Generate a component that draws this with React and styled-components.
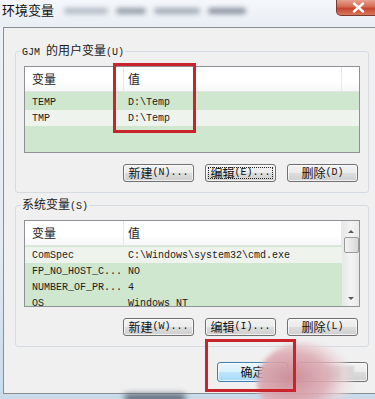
import React from 'react';
import styled, { createGlobalStyle } from 'styled-components';

const CJK = '"Noto Sans CJK SC", "Noto Sans", sans-serif';
const MONO = '"Liberation Mono", "DejaVu Sans Mono", monospace';

const GlobalStyle = createGlobalStyle`
  html, body {
    margin: 0;
    padding: 0;
    background: #c9dae9;
  }
  * {
    box-sizing: border-box;
  }
`;

const Screen = styled.div`
  position: relative;
  width: 375px;
  height: 399px;
  overflow: hidden;
  font-family: ${CJK};
  font-size: 12px;
  color: #1a1a1a;
  background: linear-gradient(180deg, #eef2f7 0%, #e4ebf3 60%, #c9dbea 100%);
`;

const TitleBar = styled.div`
  height: 27px;
  display: flex;
  align-items: flex-start;
  padding-left: 2px;
  background: linear-gradient(180deg, #f4f7fb 0%, #e9eef4 100%);
`;

const Title = styled.div`
  font-size: 13px;
  line-height: 14px;
  margin-top: 3px;
  color: #111;
`;

const BlurredText = styled.div`
  display: flex;
  gap: 8px;
  margin: 8px 0 0 10px;
  filter: blur(2.5px);
  opacity: 0.8;
`;

const BlurChunk = styled.span`
  display: block;
  width: ${p => p.w}px;
  height: 6px;
  border-radius: 3px;
  background: ${p => p.c || '#8b95a2'};
`;

const CloseButton = styled.div`
  flex: none;
  margin-left: auto;
  margin-right: -8px;
  width: 47px;
  height: 16px;
  border: 1px solid #7a3a30;
  border-top: none;
  border-radius: 0 0 5px 5px;
  background: linear-gradient(180deg, #e6a090 0%, #d66a52 45%, #c5452d 55%, #d8785e 100%);
  display: flex;
  align-items: center;
  padding-left: 15px;
`;

const Frame = styled.div`
  margin-left: 3px;
  width: 380px;
  height: 367px;
  border: 1px solid #8a8e93;
  background: #f0f0f0;
  padding-top: 15px;
`;

const Group = styled.fieldset`
  margin: 0 0 0 11px;
  width: 354px;
  padding: 6px 8px 10px 8px;
  border: 1px solid #d5dbe0;
  border-radius: 3px;
  & + & {
    margin-top: 4px;
  }
`;

const Legend = styled.legend`
  margin-left: -3px;
  padding: 0 1px;
  line-height: 14px;
  font-size: 12px;
`;

const Mono = styled.span`
  font-family: ${MONO};
  font-size: 10px;
`;

const List = styled.div`
  position: relative;
  height: 87px;
  border: 1px solid #8e9196;
  background: ${p => p.bg};
  overflow: hidden;
  display: flex;
`;

const ListBody = styled.div`
  flex: 1;
  min-width: 0;
`;

const Header = styled.div`
  height: 25px;
  display: flex;
  background: linear-gradient(180deg, #ffffff 0%, #ffffff 60%, #f6f7f8 100%);
  border-bottom: 1px solid #e2e4e6;
`;

const HeadCell = styled.div`
  width: ${p => p.w}px;
  flex: ${p => (p.w ? 'none' : '1')};
  padding: 5px 0 0 ${p => p.pad}px;
  border-right: ${p => (p.sep ? '1px solid #e6e8ea' : 'none')};
  font-size: 12px;
  line-height: 14px;
`;

const Rows = styled.div`
  padding-top: ${p => p.top}px;
`;

const Row = styled.div`
  display: flex;
  height: 16px;
  align-items: center;
  background: ${p => (p.light ? '#eef3ee' : 'transparent')};
`;

const Cell = styled.div`
  width: ${p => p.w}px;
  flex: ${p => (p.w ? 'none' : '1')};
  padding-left: ${p => p.pad}px;
  font-family: ${MONO};
  font-size: 10px;
  white-space: nowrap;
  overflow: hidden;
`;

const ScrollBar = styled.div`
  width: 17px;
  display: flex;
  flex-direction: column;
  align-items: center;
  background: linear-gradient(90deg, #e8e8e8 0%, #f4f4f4 50%, #e8e8e8 100%);
  border-left: 1px solid #eaeaea;
`;

const Arrow = styled.div`
  width: 0;
  height: 0;
  margin: ${p => p.m};
  border-left: 3px solid transparent;
  border-right: 3px solid transparent;
  ${p => (p.up ? 'border-bottom: 3px solid #5a5a5a;' : 'border-top: 3px solid #5a5a5a;')}
`;

const Thumb = styled.div`
  width: 15px;
  height: 16px;
  margin-top: 4px;
  border: 1px solid #9a9a9a;
  border-radius: 2px;
  background: linear-gradient(90deg, #f3f3f3 0%, #e6e6e6 50%, #d6d6d6 100%);
`;

const Spacer = styled.div`
  flex: 1;
`;

const ButtonRow = styled.div`
  display: flex;
  justify-content: flex-end;
  gap: ${p => p.gap}px;
  margin-top: ${p => p.top}px;
  padding-right: ${p => p.right}px;
`;

const Button = styled.div`
  position: relative;
  width: 71px;
  height: ${p => p.h || 18}px;
  border: 1px solid ${p => (p.primary ? '#3c7fb1' : '#707070')};
  border-radius: 3px;
  background: ${p =>
    p.primary
      ? 'linear-gradient(180deg, #eaf6fd 0%, #d9f0fc 50%, #bee6fd 51%, #a7d9f5 100%)'
      : 'linear-gradient(180deg, #f2f2f2 0%, #ebebeb 50%, #dddddd 51%, #cfcfcf 100%)'};
  box-shadow: inset 0 0 0 1px rgba(255, 255, 255, 0.7);
  display: flex;
  align-items: center;
  justify-content: center;
  font-size: 12px;
  line-height: 14px;
  color: #111;
  &::after {
    content: '';
    display: ${p => (p.focused ? 'block' : 'none')};
    position: absolute;
    inset: 2px;
    border: 1px dotted #222;
  }
`;

const BottomRow = styled.div`
  position: relative;
  display: flex;
  gap: 9px;
  margin: 15px 0 0 213px;
`;

const Mosaic = styled.div`
  display: flex;
  filter: blur(1px);
`;

const MosaicBlock = styled.span`
  display: block;
  width: 14px;
  height: 12px;
  background: ${p => p.c};
`;

const Smudge = styled.div`
  position: absolute;
  left: 40px;
  top: -20px;
  width: 96px;
  height: 80px;
  border-radius: 50%;
  background: radial-gradient(ellipse at 35% 45%, rgba(205, 140, 150, 0.95) 0%, rgba(220, 170, 178, 0.9) 40%, rgba(236, 214, 218, 0.6) 60%, rgba(240, 230, 232, 0) 78%);
  filter: blur(2px);
`;

const TintPatch = styled.div`
  position: absolute;
  left: 46px;
  top: 5px;
  width: 42px;
  height: 14px;
  background: #c0dbe1;
  filter: blur(1px);
`;

const Callout = styled.div`
  position: absolute;
  left: ${p => p.x}px;
  top: ${p => p.y}px;
  width: ${p => p.w}px;
  height: ${p => p.h}px;
  border: 3px solid #c9242c;
  pointer-events: none;
`;

const Desk = styled.div`
  position: absolute;
  left: 125px;
  top: 394px;
  width: 60px;
  height: 8px;
  background: #5b6470;
  filter: blur(3px);
`;

const userVars = [
  { name: 'TEMP', value: 'D:\\Temp' },
  { name: 'TMP', value: 'D:\\Temp', light: true },
];

const systemVars = [
  { name: 'ComSpec', value: 'C:\\Windows\\system32\\cmd.exe', light: true },
  { name: 'FP_NO_HOST_C...', value: 'NO' },
  { name: 'NUMBER_OF_PR...', value: '4' },
  { name: 'OS', value: 'Windows_NT' },
];

const VarList = ({ rows, top, scroll }) => (
  <List bg="#cfe6cf">
    <ListBody>
      <Header>
        <HeadCell w={99} pad={7} sep>变量</HeadCell>
        <HeadCell w={218} pad={4} sep>值</HeadCell>
        <HeadCell pad={0} />
      </Header>
      <Rows top={top}>
        {rows.map(r => (
          <Row key={r.name} light={r.light}>
            <Cell w={99} pad={7}>{r.name}</Cell>
            <Cell pad={4}>{r.value}</Cell>
          </Row>
        ))}
      </Rows>
    </ListBody>
    {scroll && (
      <ScrollBar>
        <Arrow up m="9px 0 0 0" />
        <Thumb />
        <Spacer />
        <Arrow m="0 0 6px 0" />
      </ScrollBar>
    )}
  </List>
);

const Buttons = ({ keys, focused }) => (
  <ButtonRow gap={11} top={11} right={2}>
    <Button>新建<Mono>({keys[0]})...</Mono></Button>
    <Button focused={focused}>编辑<Mono>({keys[1]})...</Mono></Button>
    <Button>删除<Mono>({keys[2]})</Mono></Button>
  </ButtonRow>
);

export default function App() {
  return (
    <Screen>
      <GlobalStyle />
      <TitleBar>
        <Title>环境变量</Title>
        <BlurredText>
          <BlurChunk w={44} c="#a3abb6" />
          <BlurChunk w={30} c="#7f8895" />
          <BlurChunk w={46} c="#8f99a6" />
          <BlurChunk w={38} c="#6f7b8a" />
        </BlurredText>
        <CloseButton>
          <svg width="13" height="11" viewBox="0 0 13 11">
            <path d="M2 1.5 L11 9.5 M11 1.5 L2 9.5" stroke="#fff" strokeWidth="2.4" strokeLinecap="round" />
          </svg>
        </CloseButton>
      </TitleBar>
      <Frame>
        <Group>
          <Legend><Mono>GJM </Mono>的用户变量<Mono>(U)</Mono></Legend>
          <VarList rows={userVars} top={2} />
          <Buttons keys={['N', 'E', 'D']} focused />
        </Group>
        <Group>
          <Legend>系统变量<Mono>(S)</Mono></Legend>
          <VarList rows={systemVars} top={1} scroll />
          <Buttons keys={['W', 'I', 'L']} />
        </Group>
        <BottomRow>
          <Button primary h={20}>确定</Button>
          <Button h={20}>
            <Mosaic>
              <MosaicBlock c="#e4e4e4" />
              <MosaicBlock c="#c8c8c8" />
              <MosaicBlock c="#d6d6d6" />
            </Mosaic>
          </Button>
          <TintPatch />
          <Smudge />
        </BottomRow>
      </Frame>
      <Callout x={113} y={63} w={83} h={70} />
      <Callout x={205} y={339} w={91} h={53} />
      <Desk />
    </Screen>
  );
}
